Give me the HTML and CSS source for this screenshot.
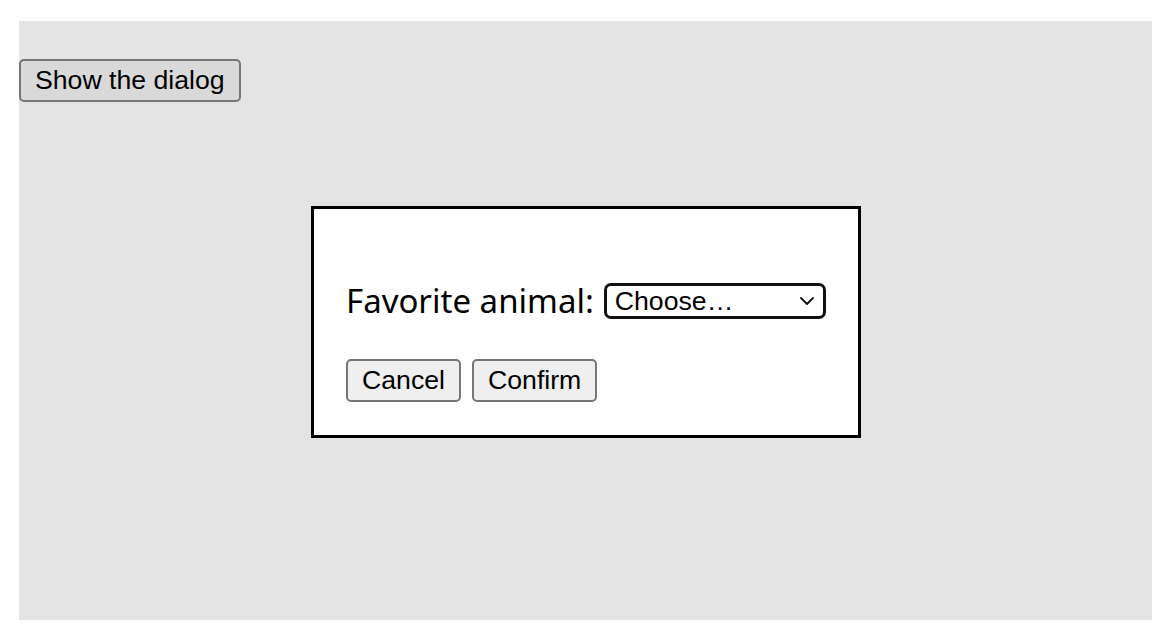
FILE: index.html
```html
<!DOCTYPE html>
<html lang="en">
<head>
<meta charset="utf-8">
<title>Dialog example</title>
<link rel="stylesheet" href="styles.css">
</head>
<body>
<div class="stage">
  <div class="toolbar">
    <button class="btn" type="button">Show the dialog</button>
  </div>
  <dialog class="dialog" open>
    <form class="form" method="dialog">
      <p class="row">
        <label class="label" for="animal">Favorite animal:</label>
        <span class="select-wrap">
          <select class="select" id="animal">
            <option>Choose…</option>
            <option>Brine shrimp</option>
            <option>Red panda</option>
            <option>Spider monkey</option>
          </select>
          <svg class="chevron" width="14" height="8" viewBox="0 0 14 8" aria-hidden="true">
            <path d="M1 1 L7 7 L13 1" fill="none" stroke="#111" stroke-width="1.8" stroke-linecap="round" stroke-linejoin="round"/>
          </svg>
        </span>
      </p>
      <div class="actions">
        <button class="btn" value="cancel">Cancel</button>
        <button class="btn" value="default">Confirm</button>
      </div>
    </form>
  </dialog>
</div>
</body>
</html>
```

FILE: styles.css
```css
html, body {
  margin: 0;
  padding: 0;
  background: #ffffff;
}

body {
  padding: 21px 8px 14px 19px;
  font-family: "Liberation Sans", Arial, sans-serif;
}

.stage {
  position: relative;
  width: 1133px;
  height: 599px;
  background: #e4e4e4;
}

.toolbar {
  padding-top: 38px;
  display: flex;
}

.btn {
  font-family: "Liberation Sans", Arial, sans-serif;
  font-size: 26.67px;
  line-height: 31px;
  height: 43px;
  padding: 4px 14px;
  margin: 0;
  border: 2px solid #767676;
  border-radius: 5px;
  background: #efefef;
  color: #000;
  box-sizing: border-box;
}

.toolbar .btn {
  background: #d9d9d9;
}

.dialog {
  position: absolute;
  left: 292px;
  top: 185px;
  margin: 0;
  width: 480px;
  padding: 32px;
  border: 3px solid #000;
  background: #fff;
  color: #000;
}

.form {
  margin: 0;
  display: flex;
  flex-direction: column;
}

.row {
  margin: 37px 0 35px;
  height: 46px;
  display: flex;
  align-items: center;
  gap: 10px;
}

.label {
  font-family: "Noto Sans", sans-serif;
  font-size: 33px;
  line-height: 46px;
}

.select-wrap {
  position: relative;
  display: flex;
}

.select {
  appearance: none;
  -webkit-appearance: none;
  width: 222px;
  height: 36px;
  box-sizing: border-box;
  border: 3px solid #111;
  border-radius: 7px;
  padding: 0 0 0 8px;
  margin: 0;
  background: #fff;
  color: #000;
  font-family: "Liberation Sans", Arial, sans-serif;
  font-size: 26.67px;
  line-height: 30px;
}

.chevron {
  position: absolute;
  right: 12px;
  top: 14px;
  pointer-events: none;
}

.actions {
  display: flex;
  gap: 11px;
  padding-bottom: 1px;
}
```
